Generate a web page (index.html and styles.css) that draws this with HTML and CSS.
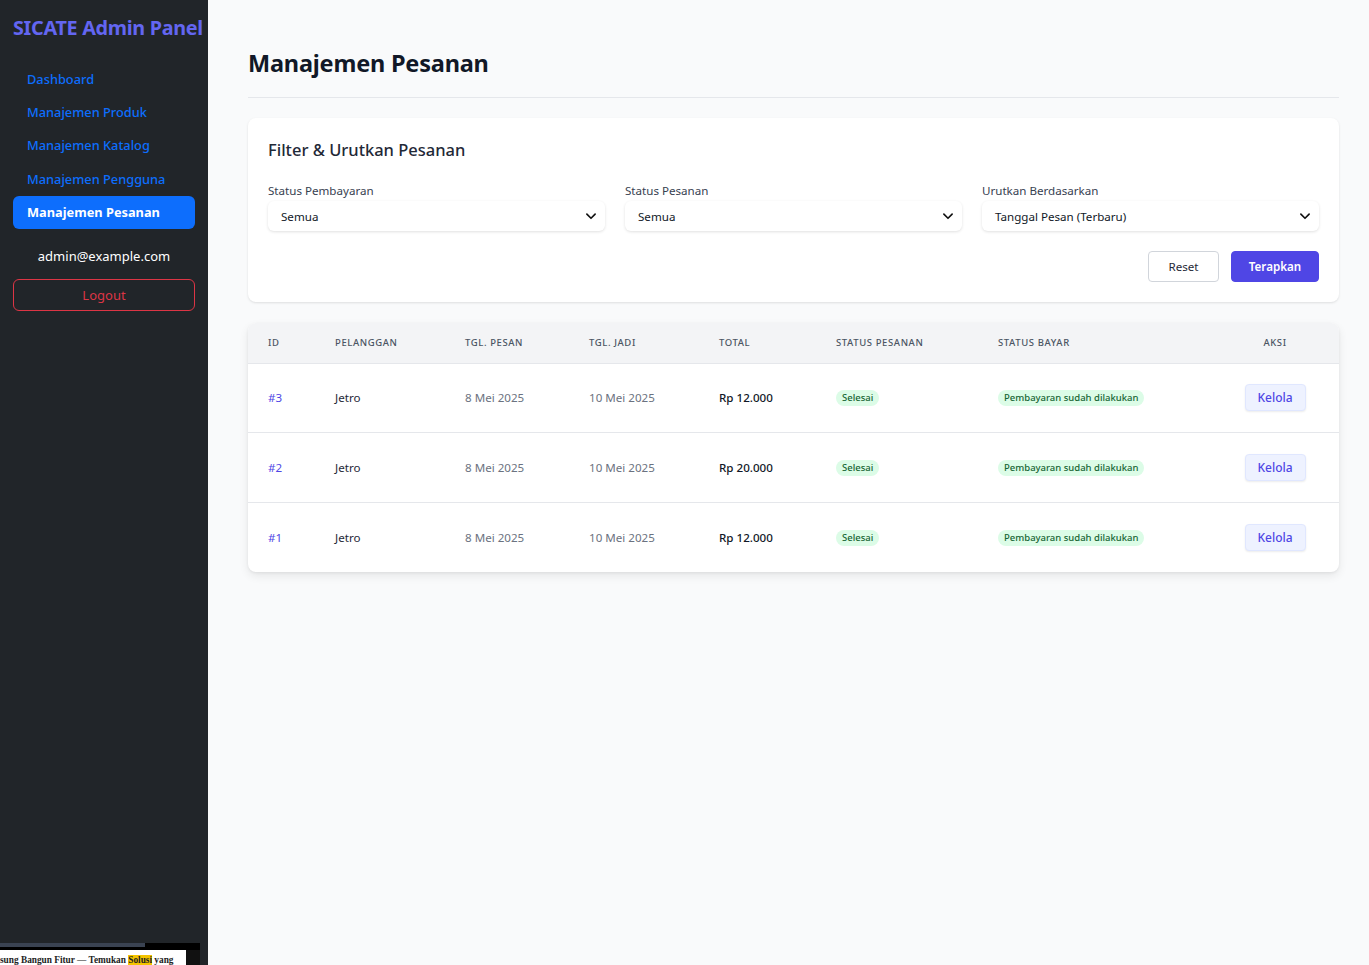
FILE: index.html
```html
<!DOCTYPE html>
<html lang="id">
<head>
<meta charset="utf-8">
<title>SICATE Admin Panel - Manajemen Pesanan</title>
<link rel="stylesheet" href="styles.css">
</head>
<body>
<div class="layout">
  <aside class="sidebar">
    <div class="brand">SICATE Admin Panel</div>
    <nav class="nav">
      <a class="nav-link" href="#">Dashboard</a>
      <a class="nav-link" href="#">Manajemen Produk</a>
      <a class="nav-link" href="#">Manajemen Katalog</a>
      <a class="nav-link" href="#">Manajemen Pengguna</a>
      <a class="nav-link active" href="#">Manajemen Pesanan</a>
    </nav>
    <div class="user-email">admin@example.com</div>
    <button class="logout">Logout</button>
    <div class="thumb">
      <div class="thumb-top"><div class="thumb-bar"></div></div>
      <div class="thumb-page"><span class="thumb-text">sung Bangun Fitur — Temukan <mark>Solusi</mark> yang</span></div>
    </div>
  </aside>

  <main class="main">
    <h1 class="page-title">Manajemen Pesanan</h1>

    <section class="card filter-card">
      <h2 class="card-title">Filter &amp; Urutkan Pesanan</h2>
      <div class="filter-grid">
        <div class="field">
          <label class="field-label">Status Pembayaran</label>
          <div class="select"><span>Semua</span><svg class="chev" viewBox="0 0 16 16" width="12" height="12"><path d="M2.5 5.5 8 11l5.5-5.5" fill="none" stroke="#111" stroke-width="2.2" stroke-linecap="round" stroke-linejoin="round"/></svg></div>
        </div>
        <div class="field">
          <label class="field-label">Status Pesanan</label>
          <div class="select"><span>Semua</span><svg class="chev" viewBox="0 0 16 16" width="12" height="12"><path d="M2.5 5.5 8 11l5.5-5.5" fill="none" stroke="#111" stroke-width="2.2" stroke-linecap="round" stroke-linejoin="round"/></svg></div>
        </div>
        <div class="field">
          <label class="field-label">Urutkan Berdasarkan</label>
          <div class="select"><span>Tanggal Pesan (Terbaru)</span><svg class="chev" viewBox="0 0 16 16" width="12" height="12"><path d="M2.5 5.5 8 11l5.5-5.5" fill="none" stroke="#111" stroke-width="2.2" stroke-linecap="round" stroke-linejoin="round"/></svg></div>
        </div>
      </div>
      <div class="filter-actions">
        <button class="btn btn-reset">Reset</button>
        <button class="btn btn-apply">Terapkan</button>
      </div>
    </section>

    <section class="card table-card">
      <table class="orders">
        <colgroup>
          <col class="c-id"><col class="c-cust"><col class="c-d1"><col class="c-d2"><col class="c-tot"><col class="c-st"><col class="c-pay"><col class="c-act">
        </colgroup>
        <thead>
          <tr>
            <th>ID</th><th>Pelanggan</th><th>Tgl. Pesan</th><th>Tgl. Jadi</th><th>Total</th><th>Status Pesanan</th><th>Status Bayar</th><th class="center">Aksi</th>
          </tr>
        </thead>
        <tbody>
          <tr>
            <td class="id">#3</td><td class="cust">Jetro</td><td class="muted">8 Mei 2025</td><td class="muted">10 Mei 2025</td><td class="total">Rp 12.000</td>
            <td><span class="badge">Selesai</span></td><td><span class="badge">Pembayaran sudah dilakukan</span></td>
            <td class="center"><button class="kelola">Kelola</button></td>
          </tr>
          <tr>
            <td class="id">#2</td><td class="cust">Jetro</td><td class="muted">8 Mei 2025</td><td class="muted">10 Mei 2025</td><td class="total">Rp 20.000</td>
            <td><span class="badge">Selesai</span></td><td><span class="badge">Pembayaran sudah dilakukan</span></td>
            <td class="center"><button class="kelola">Kelola</button></td>
          </tr>
          <tr>
            <td class="id">#1</td><td class="cust">Jetro</td><td class="muted">8 Mei 2025</td><td class="muted">10 Mei 2025</td><td class="total">Rp 12.000</td>
            <td><span class="badge">Selesai</span></td><td><span class="badge">Pembayaran sudah dilakukan</span></td>
            <td class="center"><button class="kelola">Kelola</button></td>
          </tr>
        </tbody>
      </table>
    </section>
  </main>
</div>
</body>
</html>
```
FILE: styles.css
```css
* { box-sizing: border-box; }
html, body { margin: 0; padding: 0; }
body {
  font-family: "Noto Sans", "Open Sans", sans-serif;
  background: #f9fafb;
  color: #1f2937;
}
.layout {
  display: flex;
  min-height: 965px;
}
.sidebar {
  position: relative;
  width: 208px;
  flex-shrink: 0;
  background: #212529;
  padding: 14px 13px 0 13px;
  display: flex;
  flex-direction: column;
}
.brand {
  color: #6366f1;
  font-weight: 700;
  font-size: 19.8px;
  line-height: 28px;
  white-space: nowrap;
  letter-spacing: -0.3px;
  margin-bottom: 20px;
}
.nav {
  display: flex;
  flex-direction: column;
}
.nav-link {
  display: flex;
  align-items: center;
  height: 33.4px;
  color: #0d6efd;
  text-decoration: none;
  font-size: 12.8px;
  font-weight: 500;
  padding: 0 14px;
  border-radius: 6px;
  white-space: nowrap;
}
.nav-link.active {
  background: #0d6efd;
  color: #fff;
  font-weight: 700;
}
.user-email {
  color: #fff;
  font-size: 13px;
  text-align: center;
  margin-top: 17px;
  line-height: 20px;
}
.logout {
  margin-top: 13px;
  height: 32px;
  background: transparent;
  border: 1px solid #dc3545;
  color: #dc3545;
  border-radius: 6px;
  font-family: inherit;
  font-size: 13px;
}
.thumb {
  position: absolute;
  left: 0;
  bottom: 0;
  width: 200px;
  height: 22px;
  background: #111;
}
.thumb-top {
  height: 7px;
  background: #000;
}
.thumb-bar {
  width: 145px;
  height: 4px;
  background: #3a4352;
}
.thumb-page {
  width: 186px;
  height: 15px;
  background: #fff;
  overflow: hidden;
}
.thumb-text {
  display: block;
  color: #222;
  font-family: "Liberation Serif", serif;
  font-weight: 700;
  font-size: 9.3px;
  line-height: 20px;
  white-space: nowrap;
}
.thumb-text mark { background: #f5c400; color: #222; }

.main {
  flex: 1;
  padding: 44px 30px 40px 40px;
}
.page-title {
  margin: 0;
  font-size: 23.5px;
  font-weight: 700;
  color: #111827;
  line-height: 38px;
  padding-bottom: 15px;
  border-bottom: 1px solid #e5e7eb;
  letter-spacing: -0.2px;
}
.card {
  background: #fff;
  border-radius: 8px;
  box-shadow: 0 1px 3px rgba(0,0,0,0.08), 0 1px 2px rgba(0,0,0,0.04);
}
.filter-card {
  margin-top: 20px;
  padding: 20px;
  height: 184px;
}
.card-title {
  margin: 0;
  font-size: 16.5px;
  font-weight: 500;
  color: #1f2937;
  line-height: 24px;
}
.filter-grid {
  margin-top: 21px;
  display: grid;
  grid-template-columns: 1fr 1fr 1fr;
  column-gap: 20px;
}
.field-label {
  display: block;
  font-size: 11.6px;
  color: #374151;
  line-height: 16px;
  margin-bottom: 2px;
}
.select {
  height: 30px;
  border-radius: 6px;
  background: #fff;
  box-shadow: 0 1px 3px rgba(0,0,0,0.12);
  display: flex;
  align-items: center;
  justify-content: space-between;
  padding: 0 8px 0 13px;
  font-size: 11.6px;
  color: #111827;
}
.filter-actions {
  margin-top: 20px;
  display: flex;
  justify-content: flex-end;
  gap: 12px;
}
.btn {
  height: 31px;
  border-radius: 4px;
  font-family: inherit;
  font-size: 11.6px;
  padding: 0;
}
.btn-reset {
  background: #fff;
  border: 1px solid #d1d5db;
  color: #1f2937;
  width: 71px;
}
.btn-apply {
  background: #4f46e5;
  border: 1px solid #4f46e5;
  color: #fff;
  font-weight: 600;
  width: 88px;
}
.table-card {
  margin-top: 21px;
  overflow: hidden;
  box-shadow: 0 4px 10px rgba(0,0,0,0.08), 0 1px 3px rgba(0,0,0,0.06);
}
.orders {
  width: 100%;
  border-collapse: collapse;
  table-layout: fixed;
}
.c-id { width: 67px; }
.c-cust { width: 130px; }
.c-d1 { width: 124px; }
.c-d2 { width: 130px; }
.c-tot { width: 117px; }
.c-st { width: 162px; }
.c-pay { width: 233px; }
.c-act { width: 128px; }
.orders th {
  background: #f3f4f6;
  text-align: left;
  text-transform: uppercase;
  font-size: 9.5px;
  font-weight: 500;
  letter-spacing: 0.6px;
  color: #4b5563;
  height: 40px;
  padding: 0 0 0 20px;
  border-bottom: 1px solid #e5e7eb;
}
.orders th.center, .orders td.center { text-align: center; padding: 0 20px; }
.orders td {
  height: 69.5px;
  padding: 0 0 0 20px;
  font-size: 11.6px;
  color: #1f2937;
  border-bottom: 1px solid #e5e7eb;
  white-space: nowrap;
}
.orders tbody tr:last-child td { border-bottom: none; }
.orders td.id { color: #4f46e5; }
.orders td.muted { color: #6b7280; }
.orders td.total { color: #111827; font-weight: 500; }
.badge {
  display: inline-block;
  background: #dcfce7;
  color: #166534;
  font-size: 9.5px;
  font-weight: 500;
  line-height: 16px;
  padding: 0 6px;
  border-radius: 999px;
}
.kelola {
  width: 61px;
  height: 27px;
  background: #eef2ff;
  border: 1px solid #e0e7ff;
  color: #4f46e5;
  font-family: inherit;
  font-size: 12px;
  font-weight: 500;
  border-radius: 4px;
  box-shadow: 0 1px 2px rgba(0,0,0,0.08);
}
```
